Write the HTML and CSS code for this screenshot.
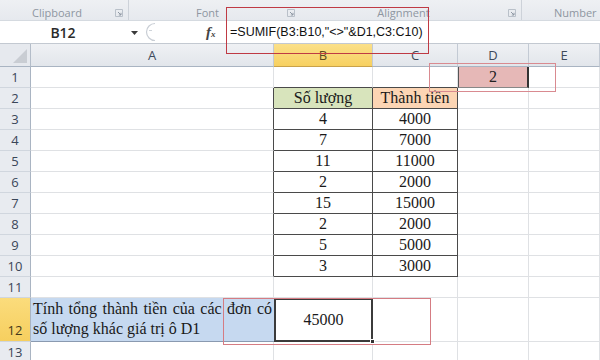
FILE: index.html
```html
<!DOCTYPE html>
<html>
<head>
<meta charset="utf-8">
<link rel="stylesheet" href="styles.css">
</head>
<body>
<div class="app">
  <div class="ribbon">
    <div class="grp g-clip"><span>Clipboard</span><svg class="launch" width="8" height="8" viewBox="0 0 8 8"><path d="M0.5 0.5H7.5V7.5H0.5Z" fill="none" stroke="#b9c0c9"/><path d="M3 3L6 6M6 3.8V6H3.8" fill="none" stroke="#8f98a4"/></svg></div>
    <div class="grp g-font"><span>Font</span><svg class="launch" width="8" height="8" viewBox="0 0 8 8"><path d="M0.5 0.5H7.5V7.5H0.5Z" fill="none" stroke="#b9c0c9"/><path d="M3 3L6 6M6 3.8V6H3.8" fill="none" stroke="#8f98a4"/></svg></div>
    <div class="grp g-align"><span>Alignment</span><svg class="launch" width="8" height="8" viewBox="0 0 8 8"><path d="M0.5 0.5H7.5V7.5H0.5Z" fill="none" stroke="#b9c0c9"/><path d="M3 3L6 6M6 3.8V6H3.8" fill="none" stroke="#8f98a4"/></svg></div>
    <div class="grp g-num"><span>Number</span></div>
  </div>
  <div class="fbar">
    <div class="namebox"><span class="nb-text">B12</span><svg class="nb-arrow" width="7" height="4" viewBox="0 0 7 4"><path d="M0 0H7L3.5 4Z" fill="#3a3a3a"/></svg></div>
    <div class="fbtns">
      <svg class="pill" width="16" height="20" viewBox="0 0 16 20"><path d="M12 1.5A8.5 8.5 0 0 0 12 18.5" fill="none" stroke="#c9ced5" stroke-width="1.2"/><path d="M6 8.5H9" stroke="#cfd4da" stroke-width="1"/></svg>
      <span class="fx"><i>f</i><span class="x">x</span></span>
    </div>
    <div class="formula">=SUMIF(B3:B10,"&lt;&gt;"&amp;D1,C3:C10)</div>
  </div>
  <div class="sheet">
    <div class="corner"><svg width="14" height="14" viewBox="0 0 14 14"><path d="M14 0V14H0Z" fill="#c9cdd3"/></svg></div>
    <div class="ch">A</div><div class="ch ch-sel">B</div><div class="ch">C</div><div class="ch">D</div><div class="ch">E</div>

    <div class="rh">1</div><div class="c"></div><div class="c tb-top"></div><div class="c tb-top"></div><div class="c d1">2</div><div class="c"></div>
    <div class="rh">2</div><div class="c tb-left"></div><div class="c t hq">Số lượng</div><div class="c t ht">Thành tiền</div><div class="c"></div><div class="c"></div>
    <div class="rh">3</div><div class="c tb-left"></div><div class="c t">4</div><div class="c t">4000</div><div class="c"></div><div class="c"></div>
    <div class="rh">4</div><div class="c tb-left"></div><div class="c t">7</div><div class="c t">7000</div><div class="c"></div><div class="c"></div>
    <div class="rh">5</div><div class="c tb-left"></div><div class="c t">11</div><div class="c t">11000</div><div class="c"></div><div class="c"></div>
    <div class="rh">6</div><div class="c tb-left"></div><div class="c t">2</div><div class="c t">2000</div><div class="c"></div><div class="c"></div>
    <div class="rh">7</div><div class="c tb-left"></div><div class="c t">15</div><div class="c t">15000</div><div class="c"></div><div class="c"></div>
    <div class="rh">8</div><div class="c tb-left"></div><div class="c t">2</div><div class="c t">2000</div><div class="c"></div><div class="c"></div>
    <div class="rh">9</div><div class="c tb-left"></div><div class="c t">5</div><div class="c t">5000</div><div class="c"></div><div class="c"></div>
    <div class="rh">10</div><div class="c tb-left"></div><div class="c t">3</div><div class="c t">3000</div><div class="c"></div><div class="c"></div>
    <div class="rh">11</div><div class="c"></div><div class="c"></div><div class="c"></div><div class="c"></div><div class="c"></div>
    <div class="rh rh-sel">12</div><div class="c a12"><p>Tính tổng thành tiền của các đơn có số lượng khác giá trị ô D1</p></div><div class="c b12">45000<span class="handle"></span></div><div class="c"></div><div class="c"></div><div class="c"></div>
    <div class="rh">13</div><div class="c"></div><div class="c"></div><div class="c"></div><div class="c"></div><div class="c"></div>
  </div>
  <div class="mark mk1"></div>
  <div class="mark mk2"></div>
  <div class="mark mk3"></div>
</div>
</body>
</html>
```

FILE: styles.css
```css
* { box-sizing: border-box; }
html, body { margin: 0; padding: 0; }
body { width: 600px; height: 360px; overflow: hidden; background: #fff; font-family: "Liberation Sans", Arial, sans-serif; }
.app { position: relative; width: 600px; height: 360px; overflow: hidden; }

.ribbon { height: 20px; display: flex; background: linear-gradient(#eef0f3, #e6e9ee); }
.grp { position: relative; display: flex; align-items: center; justify-content: center; padding-right: 14px; height: 20px; font-family: "Open Sans", sans-serif; font-size: 11px; color: #8e96a1; border-right: 1px solid #cdd2d9; }
.grp span { position: relative; top: 2px; }
.g-clip { width: 129px; }
.g-font { width: 171px; border-right: none; }
.g-align { width: 222px; }
.g-num { flex: 1; border-right: none; justify-content: flex-start; padding-left: 32px; padding-right: 0; }
.launch { position: absolute; right: 5px; top: 9px; }

.fbar { height: 24px; display: flex; background: #fff; border-top: 1px solid #d5dae0; border-bottom: 1px solid #c3c9d1; }
.namebox { position: relative; width: 142px; display: flex; align-items: center; }
.nb-text { width: 126px; text-align: center; font-family: "Open Sans", sans-serif; font-size: 14px; font-weight: 600; color: #2a2a2a; }
.nb-arrow { position: absolute; left: 131px; top: 10px; }
.fbtns { width: 84px; display: flex; align-items: center; }
.pill { margin-left: 1px; }
.fx { margin-left: 47px; font-family: "Liberation Serif", serif; font-size: 15px; color: #444; font-weight: bold; display: inline-flex; align-items: baseline; }
.fx .x { font-size: 9px; font-style: italic; }
.formula { flex: 1; display: flex; align-items: center; padding-left: 3px; font-family: "Liberation Sans", sans-serif; font-size: 12.5px; color: #111; border-left: 1px solid #e3e6ea; }

.sheet { display: grid; grid-template-columns: 31px 243px 99px 85px 71px 71px; grid-template-rows: 23px repeat(11, 21px) 44px 21px; }
.corner { background: #e6e9ee; border-right: 1px solid #b4bdc9; border-bottom: 1px solid #a9b4c2; display: flex; align-items: flex-end; justify-content: flex-end; padding: 0 3px 3px 0; }
.ch { background: linear-gradient(#eff1f4, #e2e6eb); border-right: 1px solid #c3cad4; border-bottom: 1px solid #a9b4c2; display: flex; align-items: center; justify-content: center; font-family: "Open Sans", sans-serif; font-size: 13px; color: #3e4a5b; }
.ch-sel { background: linear-gradient(#fbe08a, #f7d060); color: #5a4a20; border-bottom-color: #c9a24a; }
.rh { background: #e8ebf0; border-right: 1px solid #a9b4c2; border-bottom: 1px solid #d0d6de; display: flex; align-items: center; justify-content: center; font-family: "Open Sans", sans-serif; font-size: 13px; color: #3a4658; }
.rh-sel { background: linear-gradient(#fbdc7c, #f6cf5f); align-items: flex-end; padding-bottom: 2px; color: #45391a; }

.c { border-right: 1px solid #dfe1e4; border-bottom: 1px solid #dfe1e4; font-family: "Liberation Serif", serif; font-size: 16px; color: #1a1a1a; display: flex; align-items: center; justify-content: center; }
.tb-top { border-bottom-color: #4a4a4a; }
.tb-left { border-right-color: #4a4a4a; }
.t { border-right: 1px solid #4a4a4a; border-bottom: 1px solid #4a4a4a; }
.hq { background: #d8e4bc; }
.ht { background: #fcd5b4; }
.d1 { background: #e6b8b7; border-left: 1px solid #555; border-right: 2px solid #333; border-bottom: 1px solid #888; color: #222; }
.a12 { background: #c6d9f0; border-bottom: 1px solid #8a9ab0; border-right: none; align-items: flex-end; justify-content: flex-start; padding: 0 2px 2px 2px; }
.a12 p { margin: 0; text-align: justify; text-align-last: left; line-height: 20px; font-size: 16px; width: 100%; }
.b12 { position: relative; border: 2px solid #3b3b3b; background: #fff; }
.handle { position: absolute; right: -4px; bottom: -4px; width: 5px; height: 5px; background: #333; border: 1px solid #fff; }

.mark { position: absolute; pointer-events: none; }
.mk1 { left: 226px; top: 7px; width: 203px; height: 47px; border: 1.5px solid #bf3a44; }
.mk2 { left: 429px; top: 63px; width: 127px; height: 29px; border: 1.5px solid #d98a90; }
.mk3 { left: 223px; top: 298px; width: 208px; height: 47px; border: 1.5px solid #d57c83; }
```
